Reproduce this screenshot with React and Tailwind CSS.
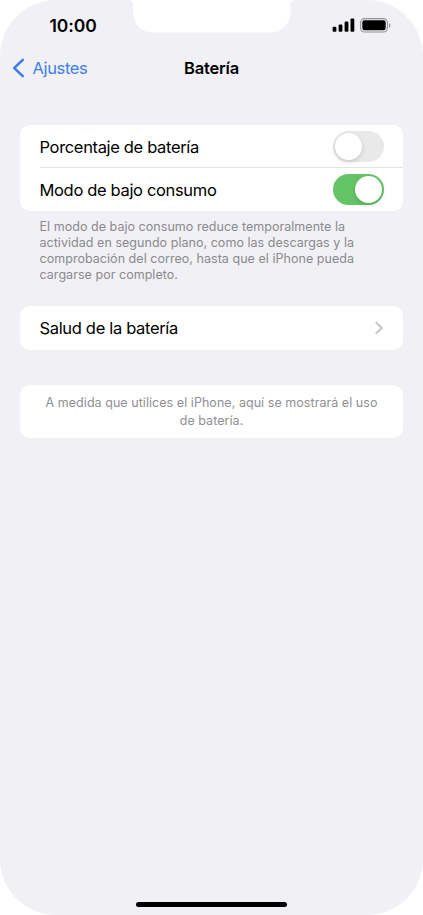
import { useState } from 'react';

function Notch() {
  return (
    <svg className="absolute left-[128px] top-0" width="168" height="33" viewBox="0 0 168 33" fill="#fff" aria-hidden="true">
      <path d="M0 0C3.5 0 5 1.5 5 5V11C5 24 13 32.6 26 32.6H141C154 32.6 162.5 24 162.5 11V5C162.5 1.5 164 0 168 0Z" />
    </svg>
  );
}

function StatusBar() {
  return (
    <div className="flex h-[50px] items-center justify-between pl-[49.5px] pr-[32px]">
      <span className="pt-[2px] text-[17.5px] font-semibold leading-5 tracking-[-0.1px]">10:00</span>
      <div className="flex items-center gap-[5px]">
        <svg width="23" height="14" viewBox="0 0 23 14" aria-hidden="true">
          <rect x="0.6" y="8.8" width="3.8" height="5" rx="1.1" />
          <rect x="6.6" y="6.6" width="3.8" height="7.2" rx="1.1" />
          <rect x="12.6" y="3.6" width="3.8" height="10.2" rx="1.1" />
          <rect x="18.5" y="0.4" width="3.8" height="13.4" rx="1.1" />
        </svg>
        <svg width="31" height="15" viewBox="0 0 31 15" aria-hidden="true">
          <rect x="0.6" y="0.6" width="26.8" height="13.4" rx="4" fill="none" stroke="#929296" strokeWidth="1.1" />
          <rect x="2.3" y="2.3" width="23.4" height="10" rx="2.2" />
          <path d="M29 5.2c1.9.7 1.9 3.9 0 4.6Z" fill="#929296" />
        </svg>
      </div>
    </div>
  );
}

function Toggle({ label, initial }) {
  const [on, setOn] = useState(initial);

  return (
    <button
      type="button"
      role="switch"
      aria-checked={on}
      aria-label={label}
      onClick={() => setOn((v) => !v)}
      className={`flex h-[31px] w-[51px] items-center rounded-full p-[2px] ${on ? 'justify-end bg-[#65c466]' : 'justify-start bg-[#e9e9ea]'}`}
    >
      <span className="size-[27px] rounded-full bg-white shadow-[0_2px_5px_rgba(0,0,0,0.15)]" />
    </button>
  );
}

function Chevron() {
  return (
    <svg width="8" height="14" viewBox="0 0 8 14" fill="none" stroke="#c4c4c7" strokeWidth="2" strokeLinecap="round" strokeLinejoin="round" aria-hidden="true">
      <path d="M1.4 1.8 6.8 6.9 1.4 12" />
    </svg>
  );
}

export default function App() {
  return (
    <div className="h-[915px] w-[423px] bg-white font-[Inter,sans-serif] text-black">
      <div className="relative flex h-full flex-col overflow-hidden rounded-[56px] bg-[#f1f0f5]">
        <Notch />
        <StatusBar />

        <header className="grid h-[36px] grid-cols-[1fr_auto_1fr] items-center px-[12px]">
          <button type="button" className="flex items-center gap-[7.5px] text-[#417fe8]">
            <svg width="13" height="20" viewBox="0 0 13 20" fill="none" stroke="currentColor" strokeWidth="2.5" strokeLinecap="round" strokeLinejoin="round" aria-hidden="true">
              <path d="M10.8 1.8 2.2 10l8.6 8.2" />
            </svg>
            <span className="text-[16.5px] leading-5 tracking-[-0.35px]">Ajustes</span>
          </button>
          <h1 className="text-[16.5px] font-semibold leading-5 tracking-[-0.2px]">Batería</h1>
        </header>

        <main className="flex flex-col px-[20px] pt-[38.5px]">
          <section className="rounded-[10px] bg-white pl-[19.5px] text-[16.5px] leading-6 tracking-[-0.34px]">
            <div className="flex h-[43px] items-center justify-between border-b border-[#e3e3e6] pr-[19px] pt-[1px]">
              <span className="pt-[1px]">Porcentaje de batería</span>
              <Toggle label="Porcentaje de batería" initial={false} />
            </div>
            <div className="flex h-[43.5px] items-center justify-between pr-[19px] pt-[1px]">
              <span>Modo de bajo consumo</span>
              <Toggle label="Modo de bajo consumo" initial />
            </div>
          </section>
          <p className="mt-[8px] px-[19.5px] text-[12.5px] leading-[16px] tracking-[0.04px] text-[#8a8a8e]">
            El modo de bajo consumo reduce temporalmente la<br />
            actividad en segundo plano, como las descargas y la<br />
            comprobación del correo, hasta que el iPhone pueda<br />
            cargarse por completo.
          </p>

          <button type="button" className="mt-[23px] flex h-[43.5px] items-center justify-between rounded-[10px] bg-white pl-[19.5px] pr-[20px] pt-[1px] text-[16.5px] leading-6 tracking-[-0.33px]">
            <span>Salud de la batería</span>
            <Chevron />
          </button>

          <section className="mt-[35px] h-[53.5px] rounded-[10px] bg-white pt-[9.5px] text-center text-[12.5px] leading-[18px] tracking-[0.05px] text-[#8f8f93]">
            A medida que utilices el iPhone, aquí se mostrará el uso<br />
            de batería.
          </section>
        </main>

        <div className="mx-auto mb-[8px] mt-auto h-[5px] w-[151px] rounded-full bg-black" />
      </div>
    </div>
  );
}
